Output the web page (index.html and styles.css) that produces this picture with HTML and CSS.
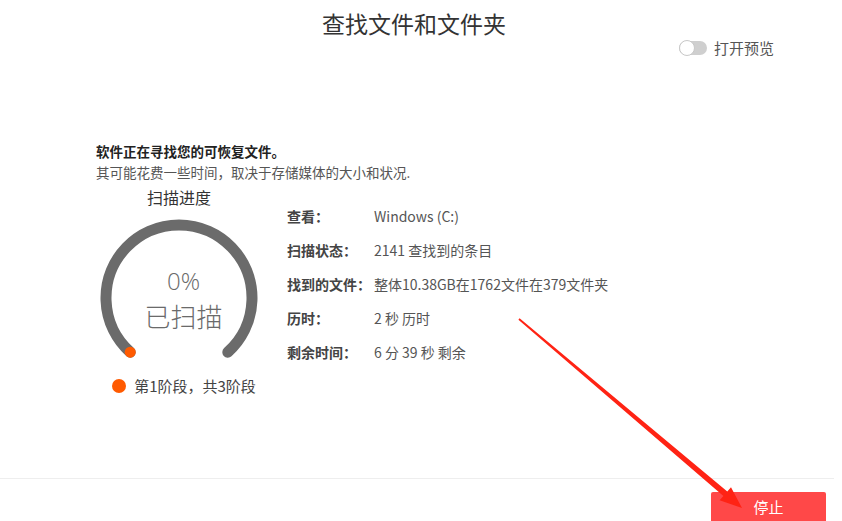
FILE: index.html
```html
<!DOCTYPE html>
<html lang="zh-CN">
<head>
<meta charset="utf-8">
<title>查找文件和文件夹</title>
<link rel="stylesheet" href="styles.css">
</head>
<body>
<div class="page">
  <header class="header">
    <h1 class="title">查找文件和文件夹</h1>
  </header>
  <div class="toolbar">
    <span class="toggle"><span class="knob"></span></span>
    <span class="toggle-label">打开预览</span>
  </div>
  <main class="main">
    <div class="intro">
      <p class="intro-strong">软件正在寻找您的可恢复文件。</p>
      <p class="intro-sub">其可能花费一些时间，取决于存储媒体的大小和状况.</p>
    </div>
    <div class="content">
      <div class="progress-col">
        <div class="progress-title">扫描进度</div>
        <div class="gauge">
          <svg class="gauge-svg" width="166" height="160" viewBox="0 0 166 160">
            <path d="M 34.2 139.2 A 73 73 0 1 1 131.8 139.2" fill="none" stroke="#6b6b6b" stroke-width="11" stroke-linecap="round"/>
            <circle cx="34.2" cy="139.2" r="5.5" fill="#ff5a00"/>
          </svg>
          <div class="gauge-text">
            <div class="gauge-pct">0%</div>
            <div class="gauge-lbl">已扫描</div>
          </div>
        </div>
        <div class="stage"><span class="stage-dot"></span>第1阶段，共3阶段</div>
      </div>
      <div class="info">
        <div class="row"><span class="label">查看：</span><span class="value">Windows (C:)</span></div>
        <div class="row"><span class="label">扫描状态：</span><span class="value">2141 查找到的条目</span></div>
        <div class="row"><span class="label">找到的文件：</span><span class="value">整体10.38GB在1762文件在379文件夹</span></div>
        <div class="row"><span class="label">历时：</span><span class="value">2 秒 历时</span></div>
        <div class="row"><span class="label">剩余时间：</span><span class="value">6 分 39 秒 剩余</span></div>
      </div>
    </div>
  </main>
  <footer class="footer">
    <button class="stop">停止</button>
  </footer>
  <svg class="arrow" width="842" height="521" viewBox="0 0 842 521">
    <polygon points="519.6,318.3 727.3,491.5 731,487.2 742,508 719.6,500.3 723.4,496 518.4,319.7" fill="#ff2314"/>
  </svg>
</div>
</body>
</html>
```

FILE: styles.css
```css
* { box-sizing: border-box; }
html, body { margin: 0; padding: 0; background: #fff; }
body {
  font-family: "Noto Sans CJK SC", "Noto Sans", sans-serif;
  color: #444;
}
.page {
  position: relative;
  width: 842px;
  height: 521px;
  overflow: hidden;
  display: flex;
  flex-direction: column;
}
.header {
  height: 36px;
  display: flex;
  justify-content: center;
  align-items: flex-start;
  padding-right: 14px;
}
.title {
  margin: 7px 0 0 0;
  font-size: 23px;
  line-height: 32px;
  font-weight: 400;
  color: #333;
}
.toolbar {
  height: 24px;
  display: flex;
  justify-content: flex-end;
  align-items: center;
  padding-right: 68px;
  gap: 7px;
}
.toggle {
  width: 28px;
  height: 14px;
  border-radius: 7px;
  background: #cfcfcf;
  position: relative;
}
.knob {
  position: absolute;
  left: 0;
  top: -1px;
  width: 16px;
  height: 16px;
  border-radius: 50%;
  background: #fff;
  border: 1px solid #c8c8c8;
}
.toggle-label {
  font-size: 15px;
  color: #555;
  line-height: 20px;
}
.main {
  flex: 1;
  padding: 81px 0 0 96px;
}
.intro p { margin: 0; font-size: 13.5px; line-height: 21px; }
.intro-strong { font-weight: 700; color: #222; }
.intro-sub { color: #555; }
.content { display: flex; }
.progress-col {
  width: 166px;
  display: flex;
  flex-direction: column;
  align-items: center;
}
.progress-title {
  margin-top: 2px;
  font-size: 16px;
  line-height: 24px;
  color: #333;
}
.gauge {
  position: relative;
  width: 166px;
  height: 160px;
  margin-top: 4px;
}
.gauge-svg { display: block; }
.gauge-text {
  position: absolute;
  left: 0;
  right: 0;
  top: 51px;
  padding-left: 9px;
  text-align: center;
  color: #6a6a6a;
}
.gauge-pct { font-size: 24px; line-height: 34px; font-family: "Open Sans", "Noto Sans", sans-serif; font-weight: 300; }
.gauge-lbl { font-size: 26px; line-height: 36px; font-weight: 300; }
.stage {
  margin-top: 2px;
  margin-left: 10px;
  display: flex;
  align-items: center;
  font-size: 15px;
  line-height: 22px;
  color: #444;
  white-space: nowrap;
}
.stage-dot {
  width: 14px;
  height: 14px;
  border-radius: 50%;
  background: #ff5a00;
  margin-right: 8px;
}
.info {
  margin-left: 25px;
  margin-top: 16px;
}
.row {
  height: 34px;
  display: flex;
  align-items: center;
  font-size: 14px;
  white-space: nowrap;
}
.label {
  width: 87px;
  font-weight: 700;
  color: #444;
}
.value { color: #555; }
.footer {
  height: 43px;
  margin-right: 8px;
  border-top: 1px solid #eeeeee;
  position: relative;
}
.stop {
  position: absolute;
  left: 711px;
  top: 13px;
  width: 115px;
  height: 36px;
  border: none;
  border-radius: 2px;
  background: #ff4848;
  color: #fff;
  font-family: "Noto Sans CJK SC", sans-serif;
  font-size: 15px;
  padding: 0 0 8px 0;
}
.arrow {
  position: absolute;
  left: 0;
  top: 0;
  pointer-events: none;
}
```
